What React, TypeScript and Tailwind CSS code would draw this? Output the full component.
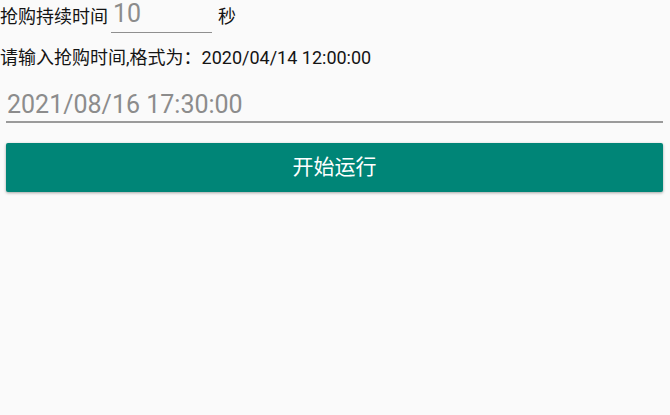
import React from 'react';

const FONT = { fontFamily: 'Roboto, "Noto Sans CJK SC", sans-serif' };

const App: React.FC = () => {
  return (
    <div className="w-[670px] h-[415px] bg-[#fafafa] text-[#141414]" style={FONT}>
      {/* duration row */}
      <div className="flex items-start">
        <span className="mt-[7px] text-[18px] leading-[20px]">抢购持续时间</span>
        <div className="ml-[3px] w-[101px] pb-[4px] border-b-[1.5px] border-[#8f8f8f]">
          <div className="pl-[2px] text-[25px] leading-[28px] text-[#8c8c8c]">10</div>
        </div>
        <span className="ml-[6px] mt-[7px] text-[18px] leading-[20px]">秒</span>
      </div>

      <div className="mt-[15px] text-[18px] leading-[20px]">请输入抢购时间,格式为：2020/04/14 12:00:00</div>

      <div className="mt-[22px] ml-[6px] w-[657px] pb-[2px] border-b-2 border-[#9a9a9a]">
        <div className="pl-[1px] text-[25px] leading-[29px] text-[#8c8c8c]">2021/08/16 17:30:00</div>
      </div>

      <button className="mt-[20px] ml-[6px] w-[657px] h-[49px] rounded-[2px] bg-[#008577] text-white text-[21px] flex items-center justify-center shadow-[0_1px_3px_rgba(0,0,0,0.35)]">
        开始运行
      </button>
    </div>
  );
};

export default App;
